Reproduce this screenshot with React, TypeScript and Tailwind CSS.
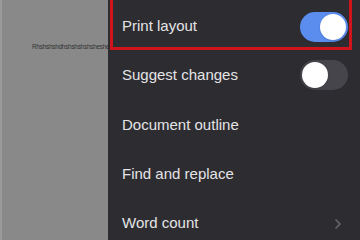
import { ChevronRight } from "lucide-react";

function Toggle({ on }: { on: boolean }) {
  return (
    <div
      className={
        on
          ? "flex h-[30px] w-[48px] items-center justify-end rounded-full bg-[#5b8def] p-[2px]"
          : "flex h-[30px] w-[48px] items-center justify-start rounded-full bg-[#46454b] p-[2px]"
      }
    >
      <div className="h-[26px] w-[26px] rounded-full bg-white shadow" />
    </div>
  );
}

const rows = [
  { label: "Suggest changes", toggle: false, h: "h-[50px]" },
  { label: "Document outline", h: "h-[50px]" },
  { label: "Find and replace", h: "h-[49px]" },
  { label: "Word count", chevron: true, h: "h-[49px]" },
];

export default function App() {
  return (
    <div className="flex h-[240px] w-[360px] overflow-hidden font-['Liberation_Sans',sans-serif]">
      <div className="w-[108px] shrink-0 border-l-2 border-[#9a9a9a] bg-[#898989] pl-[30px] pt-[42px]">
        <div className="whitespace-nowrap text-[6.5px] tracking-[-0.3px] text-[#333333]">
          Rhshshshdhshshshshsheshe
        </div>
      </div>

      <div className="flex flex-1 flex-col bg-[#2d2c31] text-[15px] text-[#e4e4e6]">
        <div className="ml-[2px] mr-[8px] flex h-[50px] shrink-0 items-center justify-between border-x-[3px] border-b-[3px] border-[#d1131c] pt-[6px] pl-[9px] pr-[1px]">
          <span>Print layout</span>
          <Toggle on />
        </div>

        {rows.map((row) => (
          <div
            key={row.label}
            className={`${row.h} flex shrink-0 items-center justify-between pl-[14px] pr-[12px]`}
          >
            <span>{row.label}</span>
            {row.toggle !== undefined && <Toggle on={row.toggle} />}
            {row.chevron && (
              <ChevronRight className="mr-[2px] h-[16px] w-[16px] text-[#67666c]" strokeWidth={2.5} />
            )}
          </div>
        ))}
      </div>
    </div>
  );
}
